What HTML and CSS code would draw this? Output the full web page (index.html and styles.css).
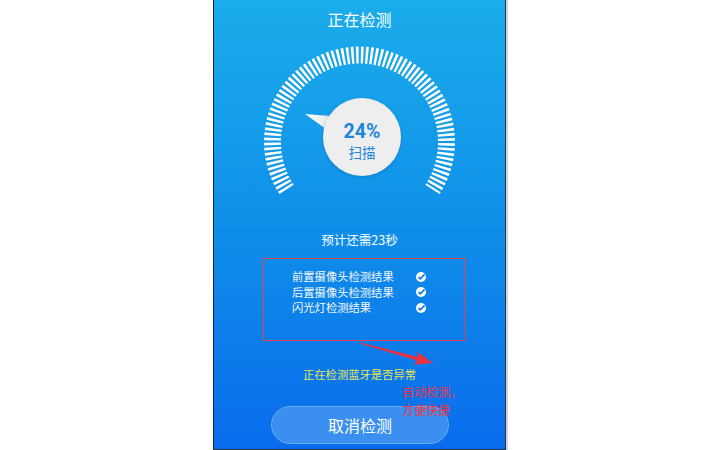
FILE: index.html
```html
<!DOCTYPE html>
<html lang="zh">
<head>
<meta charset="utf-8">
<title>正在检测</title>
<link rel="stylesheet" href="styles.css">
</head>
<body>
<div class="phone">
  <div class="title">正在检测</div>
  <svg class="gauge" width="291" height="170" viewBox="0 0 291 170">
    <defs>
      <filter id="sh" x="-30%" y="-30%" width="160%" height="160%">
        <feDropShadow dx="0" dy="1" stdDeviation="1.6" flood-color="#06407a" flood-opacity="0.35"/>
      </filter>
      <linearGradient id="pg" x1="0" y1="0" x2="1" y2="0">
        <stop offset="0" stop-color="#ffffff"/>
        <stop offset="1" stop-color="#dfe6ec"/>
      </linearGradient>
    </defs>
    <path class="ticks" d="M72.53 151.38 A87 87 0 1 1 218.47 151.38"/>
    <polygon points="91,76 117,78 112,91" fill="url(#pg)"/>
    <circle cx="148" cy="99" r="39" fill="#eeeeee" filter="url(#sh)"/>
    <text class="pct" x="148" y="93">24%</text>
    <text class="scan" x="148" y="114">扫描</text>
  </svg>
  <div class="eta">预计还需23秒</div>
  <div class="box">
    <div class="row"><span>前置摄像头检测结果</span><svg class="ok" viewBox="0 0 10 10"><circle cx="5" cy="5" r="5" fill="#fff"/><path d="M2.5 5.1 L4.3 6.9 L8.6 2.4" fill="none" stroke="#0a7ae6" stroke-width="1.6"/></svg></div>
    <div class="row"><span>后置摄像头检测结果</span><svg class="ok" viewBox="0 0 10 10"><circle cx="5" cy="5" r="5" fill="#fff"/><path d="M2.5 5.1 L4.3 6.9 L8.6 2.4" fill="none" stroke="#0a7ae6" stroke-width="1.6"/></svg></div>
    <div class="row"><span>闪光灯检测结果</span><svg class="ok" viewBox="0 0 10 10"><circle cx="5" cy="5" r="5" fill="#fff"/><path d="M2.5 5.1 L4.3 6.9 L8.6 2.4" fill="none" stroke="#0a7ae6" stroke-width="1.6"/></svg></div>
  </div>
  <div class="status">正在检测蓝牙是否异常</div>
  <div class="btn">取消检测</div>
  <svg class="arrow" width="90" height="40" viewBox="0 0 90 40">
    <polygon points="6.16,7.42 64.08,22.06 63.4,17 79,28 60,29.6 63.12,25.54 5.84,8.58" fill="#f0303c"/>
  </svg>
  <div class="note">
    <div class="note-line">自动检测，</div>
    <div class="note-line">方便快捷</div>
  </div>
</div>
</body>
</html>
```
FILE: styles.css
```css
html, body {
  margin: 0;
  padding: 0;
  background: #ffffff;
}
body {
  width: 720px;
  height: 450px;
  overflow: hidden;
  font-family: "Noto Sans CJK SC", "Noto Sans", sans-serif;
}
.phone {
  position: relative;
  margin-left: 213px;
  width: 291px;
  height: 449px;
  border-left: 1px solid #1b2330;
  border-right: 1px solid #24374e;
  border-bottom: 1px solid #2b3442;
  box-shadow: 2px 0 0 #d2d4d8;
  background: linear-gradient(180deg, #1badeb 0%, #0f8fe9 50%, #0a6cec 100%);
  color: #ffffff;
}
.title {
  height: 38px;
  line-height: 38px;
  text-align: center;
  font-size: 16px;
}
.gauge {
  display: block;
}
.ticks {
  fill: none;
  stroke: #ffffff;
  stroke-width: 17;
  stroke-dasharray: 2.5 2.196;
}
.pct {
  font-family: Roboto, "Noto Sans", sans-serif;
  font-weight: 700;
  font-size: 19.5px;
  fill: #1c87d9;
  text-anchor: middle;
  dominant-baseline: central;
}
.scan {
  font-size: 13.5px;
  fill: #1c87d9;
  text-anchor: middle;
  dominant-baseline: central;
}
.eta {
  margin-top: 24px;
  line-height: 16px;
  font-size: 12.5px;
  text-align: center;
}
.box {
  box-sizing: border-box;
  margin-top: 10px;
  margin-left: 49px;
  width: 203px;
  height: 83px;
  border: 1px solid #e2454e;
  padding: 10px 0 0 28px;
}
.row {
  display: grid;
  grid-template-columns: 124px 10px;
  align-items: center;
  height: 15.5px;
  font-size: 11.3px;
  line-height: 15.5px;
  color: #f4f7fb;
}
.ok {
  width: 10px;
  height: 10px;
  display: block;
}
.status {
  margin-top: 25px;
  line-height: 16px;
  font-size: 11.3px;
  text-align: center;
  color: #e6e64a;
}
.btn {
  box-sizing: border-box;
  margin-top: 24px;
  margin-left: 57px;
  width: 178px;
  height: 38px;
  border-radius: 19px;
  background: #3b8ff0;
  border: 1px solid #6aaaf3;
  text-align: center;
  line-height: 36px;
  font-size: 16px;
}
.arrow {
  position: absolute;
  left: 140px;
  top: 335px;
}
.note {
  position: absolute;
  left: 188px;
  top: 383px;
  color: #ee3340;
  white-space: nowrap;
}
.note-line {
  font-size: 12px;
  line-height: 17.5px;
  height: 17.5px;
}
```
